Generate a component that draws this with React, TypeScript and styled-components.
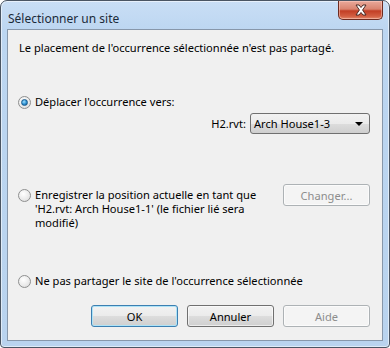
import styled, { createGlobalStyle } from "styled-components";

const Global = createGlobalStyle`
  html, body {
    margin: 0;
    padding: 0;
    background: #ffffff;
  }
  body {
    font-family: "Noto Sans", "Open Sans", sans-serif;
    font-size: 11.1px;
    color: #000;
  }
`;

const Window = styled.div`
  width: 390px;
  height: 348px;
  box-sizing: border-box;
  display: flex;
  flex-direction: column;
  border: 1px solid #4a5563;
  border-radius: 7px 7px 4px 4px;
  background: linear-gradient(
    to bottom,
    #c9def5 0px,
    #bcd6f1 30px,
    #b9d3ee 100%
  );
  box-shadow: inset 0 0 0 1px rgba(255, 255, 255, 0.55);
  overflow: hidden;
`;

const TitleBar = styled.div`
  height: 28px;
  flex: none;
  display: flex;
  align-items: flex-start;
  padding-left: 7px;
`;

const Title = styled.div`
  margin-top: 9px;
  font-size: 12px;
  color: #1c2a3a;
  flex: 1;
`;

const CloseButton = styled.div`
  width: 43px;
  height: 18px;
  margin-right: 6px;
  border: 1px solid #6d2b20;
  border-top: none;
  border-radius: 0 0 5px 5px;
  background: linear-gradient(
    to bottom,
    #e9a99b 0%,
    #d9846f 45%,
    #c23e25 55%,
    #d35f42 85%,
    #e28a6d 100%
  );
  box-shadow: inset 0 0 0 1px rgba(255, 210, 200, 0.5);
  display: flex;
  align-items: center;
  justify-content: center;
`;

const Client = styled.div`
  flex: 1;
  margin: 0 6px 6px 6px;
  border: 1px solid #8797aa;
  background: #f0f0f0;
  display: flex;
  flex-direction: column;
  padding: 11px 12px 0 10px;
`;

const Message = styled.div`
  line-height: 14px;
  margin-left: 1px;
`;

const RadioRow = styled.label<{ $top: number }>`
  display: flex;
  align-items: flex-start;
  gap: 4px;
  margin-top: ${({ $top }) => $top}px;
  line-height: 14px;
`;

const RadioCircle = styled.span<{ $checked?: boolean }>`
  width: 11px;
  height: 11px;
  flex: none;
  border-radius: 50%;
  border: 1px solid #8e8f8f;
  margin-top: 1px;
  background: radial-gradient(circle at 40% 35%, #ffffff 0%, #e9e9e9 60%, #d3d3d3 100%);
  display: flex;
  align-items: center;
  justify-content: center;
  &::after {
    content: "";
    display: ${({ $checked }) => ($checked ? "block" : "none")};
    width: 5px;
    height: 5px;
    border-radius: 50%;
    border: 1px solid #1a5c8e;
    background: radial-gradient(circle at 40% 35%, #9fe0ff 0%, #2a8ed0 55%, #0d4f85 100%);
  }
`;

const FieldRow = styled.div`
  display: flex;
  justify-content: flex-end;
  align-items: center;
  gap: 4px;
  margin-top: 4px;
`;

const Select = styled.div`
  width: 109px;
  height: 19px;
  border: 1px solid #707070;
  border-radius: 3px;
  background: linear-gradient(to bottom, #f2f2f2 0%, #ebebeb 50%, #dddddd 51%, #cfcfcf 100%);
  display: flex;
  align-items: center;
  justify-content: space-between;
  padding: 0 6px 0 3px;
  box-sizing: content-box;
`;

const Arrow = styled.span`
  width: 0;
  height: 0;
  border-left: 4px solid transparent;
  border-right: 4px solid transparent;
  border-top: 4px solid #000;
`;

const SaveRow = styled.div`
  display: flex;
  justify-content: space-between;
  align-items: flex-start;
  margin-top: 54px;
`;

const Button = styled.div<{ $default?: boolean; $disabled?: boolean }>`
  width: 85px;
  height: 20px;
  flex: none;
  border-radius: 3px;
  display: flex;
  align-items: center;
  justify-content: center;
  border: 1px solid
    ${({ $default, $disabled }) =>
      $disabled ? "#adb2b5" : $default ? "#3c7fb1" : "#707070"};
  color: ${({ $disabled }) => ($disabled ? "#8d8d8d" : "#000")};
  background: ${({ $disabled }) =>
    $disabled
      ? "#f4f4f4"
      : "linear-gradient(to bottom, #f2f2f2 0%, #ebebeb 50%, #dddddd 51%, #cfcfcf 100%)"};
  box-shadow: ${({ $default }) =>
    $default ? "inset 0 0 0 1px #aee3f7" : "inset 0 0 0 1px rgba(255,255,255,0.6)"};
`;

const ChangeButton = styled(Button)`
  margin-top: -4px;
`;

const Footer = styled.div`
  display: flex;
  justify-content: flex-end;
  gap: 9px;
  margin-top: 17px;
`;

const CloseIcon = () => (
  <svg width="14" height="12" viewBox="0 0 14 12">
    <path
      d="M2 1 L5 1 L7 3.5 L9 1 L12 1 L8.6 6 L12 11 L9 11 L7 8.5 L5 11 L2 11 L5.4 6 Z"
      fill="#ffffff"
      stroke="#4a2a24"
      strokeWidth="1"
      strokeLinejoin="round"
    />
  </svg>
);

export default function App() {
  return (
    <>
      <Global />
      <Window>
        <TitleBar>
          <Title>Sélectionner un site</Title>
          <CloseButton>
            <CloseIcon />
          </CloseButton>
        </TitleBar>
        <Client>
          <Message>Le placement de l'occurrence sélectionnée n'est pas partagé.</Message>
          <RadioRow $top={40}>
            <RadioCircle $checked />
            <span>Déplacer l'occurrence vers:</span>
          </RadioRow>
          <FieldRow>
            <span>H2.rvt:</span>
            <Select>
              <span>Arch House1-3</span>
              <Arrow />
            </Select>
          </FieldRow>
          <SaveRow>
            <RadioRow $top={0}>
              <RadioCircle />
              <span>
                Enregistrer la position actuelle en tant que
                <br />
                'H2.rvt: Arch House1-1' (le fichier lié sera
                <br />
                modifié)
              </span>
            </RadioRow>
            <ChangeButton $disabled>Changer...</ChangeButton>
          </SaveRow>
          <RadioRow $top={44}>
            <RadioCircle />
            <span>Ne pas partager le site de l'occurrence sélectionnée</span>
          </RadioRow>
          <Footer>
            <Button $default>OK</Button>
            <Button>Annuler</Button>
            <Button $disabled>Aide</Button>
          </Footer>
        </Client>
      </Window>
    </>
  );
}
